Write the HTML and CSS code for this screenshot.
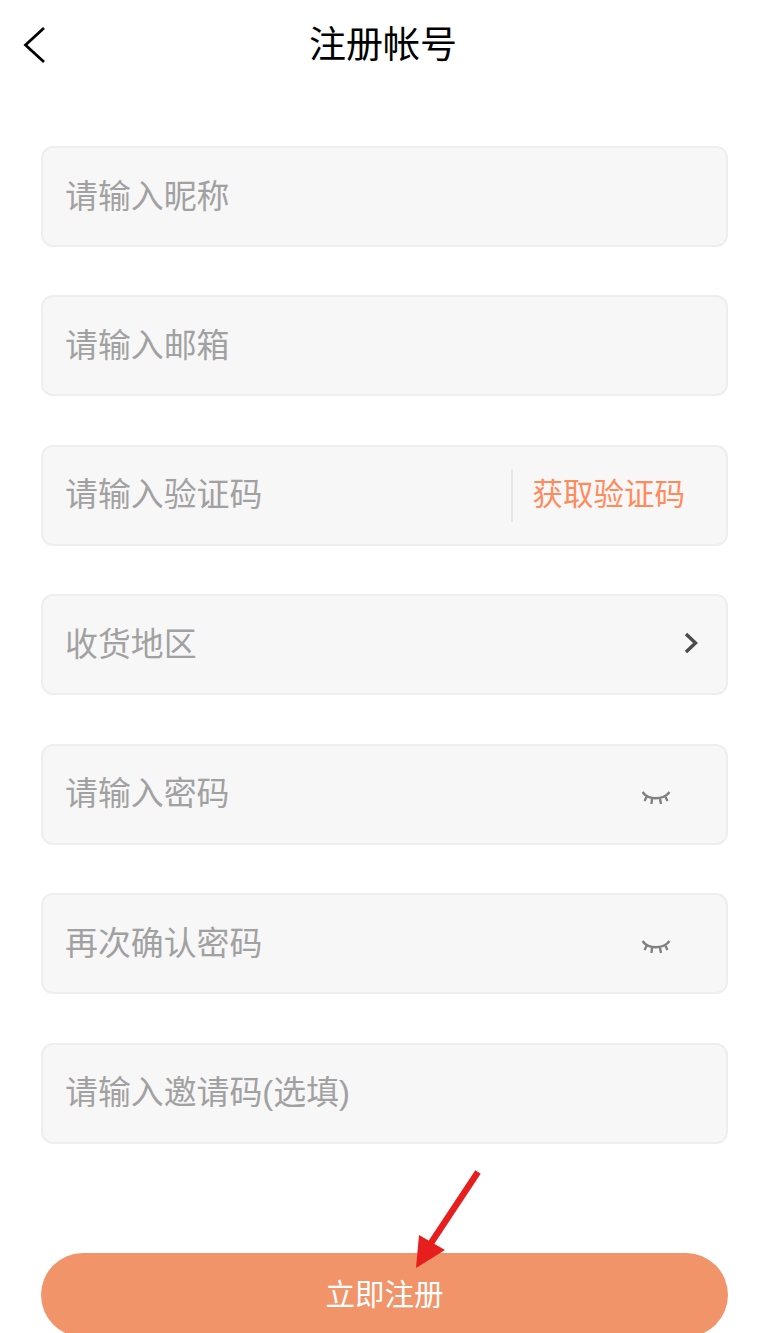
FILE: index.html
```html
<!DOCTYPE html>
<html lang="zh-CN">
<head>
    <meta charset="UTF-8">
    <meta name="viewport" content="width=device-width, initial-scale=1.0">
    <title>注册帐号</title>
    <link rel="stylesheet" href="styles.css">
</head>
<body>
    <header class="top-bar">
        <button class="back-button" aria-label="返回">
            <svg width="24" height="38" viewBox="0 0 24 38">
                <path d="M22 2 L3.500 19 L22 36" fill="none" stroke="#000" stroke-width="2.800"/>
            </svg>
        </button>
        <h1 class="page-title">注册帐号</h1>
    </header>

    <form class="register-form">
        <div class="field"><span class="placeholder">请输入昵称</span></div>
        <div class="field"><span class="placeholder">请输入邮箱</span></div>
        <div class="field">
            <span class="placeholder">请输入验证码</span>
            <span class="code-button">获取验证码</span>
        </div>
        <div class="field">
            <span class="placeholder">收货地区</span>
            <svg class="chevron" width="14" height="22" viewBox="0 0 14 22">
                <path d="M2 2 L11.500 11 L2 20" fill="none" stroke="#4a4a4a" stroke-width="3.400"/>
            </svg>
        </div>
        <div class="field">
            <span class="placeholder">请输入密码</span>
            <svg class="eye" width="30" height="20" viewBox="0 0 30 20">
                <path d="M2 3 C8 10 21 10 28 3 M1.500 2 L4 4.500 M5.500 7 L3.500 11 M11 9 L10.500 14 M19 9 L20 14 M24.500 7 L26.500 11 M28.500 2 L26 4.500" fill="none" stroke="#808080" stroke-width="2.400"/>
            </svg>
        </div>
        <div class="field">
            <span class="placeholder">再次确认密码</span>
            <svg class="eye" width="30" height="20" viewBox="0 0 30 20">
                <path d="M2 3 C8 10 21 10 28 3 M1.500 2 L4 4.500 M5.500 7 L3.500 11 M11 9 L10.500 14 M19 9 L20 14 M24.500 7 L26.500 11 M28.500 2 L26 4.500" fill="none" stroke="#808080" stroke-width="2.400"/>
            </svg>
        </div>
        <div class="field"><span class="placeholder">请输入邀请码(选填)</span></div>
        <button class="submit-button" type="button">立即注册</button>
    </form>

    <!-- red annotation arrow drawn over the button -->
    <svg class="annotation" width="80" height="110" viewBox="0 0 80 110">
        <path d="M67 2 L18 76" fill="none" stroke="#e61e1e" stroke-width="6.500"/>
        <path d="M5 98 L8 65 L34 80 Z" fill="#e61e1e"/>
    </svg>
</body>
</html>
```

FILE: styles.css
```css
html, body {
    height: 100%;
}
body {
    position: relative;
    margin: 0;
    overflow: hidden;
    background-color: #fff;
    font-family: "Liberation Sans", "Noto Sans CJK SC", sans-serif;
}
.top-bar {
    position: relative;
    display: flex;
    align-items: center;
    justify-content: center;
    height: 88px;
}
.back-button {
    position: absolute;
    left: 22px;
    top: 26px;
    padding: 0;
    border: none;
    background: none;
    line-height: 0;
}
.page-title {
    margin: 0;
    padding: 0 3px 5px 0;
    font-size: 37px;
    font-weight: 400;
    color: #000;
}
.register-form {
    display: flex;
    flex-direction: column;
    gap: 48.450px;
    margin: 58px 41px 0;
}
.field {
    box-sizing: border-box;
    display: flex;
    align-items: center;
    justify-content: space-between;
    height: 101px;
    padding: 0 29px 0 22px;
    border: 2px solid #eee;
    border-radius: 12px;
    background-color: #f7f7f7;
}
.placeholder {
    padding-bottom: 7px;
    font-size: 32.900px;
    color: #a1a1a1;
}
.code-button {
    box-sizing: border-box;
    display: flex;
    align-items: center;
    height: 53px;
    margin-right: 12px;
    padding-left: 20px;
    padding-bottom: 7px;
    border-left: 2px solid #e6e6e6;
    font-size: 30.500px;
    color: #ff8a5c;
}
.chevron {
    margin-right: -1px;
    margin-bottom: 3px;
}
.eye {
    margin-top: 11px;
    margin-right: 26px;
}
.submit-button {
    flex-shrink: 0;
    height: 84px;
    margin-top: 61px;
    padding-bottom: 8px;
    border: none;
    border-radius: 42px;
    background-color: #f29469;
    font-family: inherit;
    font-size: 29.500px;
    color: #fff;
}
.annotation {
    position: absolute;
    left: 411px;
    top: 1170px;
}
```
